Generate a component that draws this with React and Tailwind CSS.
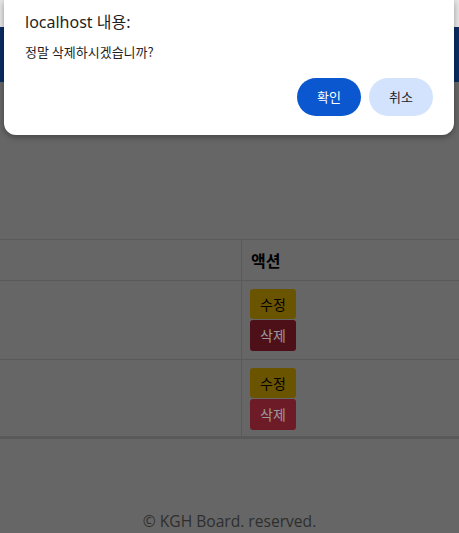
import React from "react";

const kr = { fontFamily: '"Noto Sans CJK KR", "Noto Sans", sans-serif' };

function Actions({ hover }) {
  return (
    <div className="flex flex-col items-start gap-px">
      <div className="w-[46px] h-[30px] rounded-[3px] bg-[#6b5400] text-black text-[14px] flex items-center justify-center">수정</div>
      <div className={"w-[46px] h-[31px] rounded-[3px] text-[#9a9a9a] text-[14px] flex items-center justify-center " + (hover ? "bg-[#6e1b28]" : "bg-[#4e1018]")}>삭제</div>
    </div>
  );
}

export default function App() {
  return (
    <div className="relative w-[459px] h-[533px] overflow-hidden bg-[#666666]" style={kr}>
      <div className="h-[27px] bg-[#e6e6e6]" />
      <div className="h-[55px] bg-[#0a2d63]" />
      <div className="h-[157px]" />
      <div className="border-t border-[#5a5a5a]">
        <div className="flex h-[41px] border-b border-[#595959]">
          <div className="w-[242px] border-r border-[#5a5a5a]" />
          <div className="flex-1 pl-[9px] flex items-center font-bold text-[16px] text-black">액션</div>
        </div>
        <div className="flex h-[79px] border-b border-[#595959]">
          <div className="w-[242px] border-r border-[#5a5a5a]" />
          <div className="flex-1 pl-[8px] pt-[8px]"><Actions /></div>
        </div>
        <div className="flex h-[79px] border-b-[3px] border-[#595959]">
          <div className="w-[242px] border-r border-[#5a5a5a]" />
          <div className="flex-1 pl-[8px] pt-[8px]"><Actions hover /></div>
        </div>
      </div>
      <div className="pt-[71px] text-center text-[15.6px] text-[#2e2e2e]" style={{ fontFamily: '"Open Sans", "Noto Sans CJK KR", sans-serif' }}>
        © KGH Board. reserved.
      </div>

      <div className="absolute left-[4px] top-0 w-[450px] h-[135px] bg-white rounded-b-[12px] shadow-[0_2px_6px_rgba(0,0,0,0.35)] px-[21px]">
        <div className="pt-[11px] text-[16px] text-[#1f1f1f] leading-[22px]" style={{ fontFamily: '"Noto Sans", "Noto Sans CJK KR", sans-serif' }}>localhost 내용:</div>
        <div className="mt-[10px] text-[13px] text-[#1f1f1f] leading-[18px]">정말 삭제하시겠습니까?</div>
        <div className="mt-[17px] flex justify-end gap-[8px]">
          <div className="w-[64px] h-[38px] rounded-full bg-[#0b57d0] text-white text-[13px] flex items-center justify-center">확인</div>
          <div className="w-[64px] h-[38px] rounded-full bg-[#d3e3fd] text-[#1f1f1f] text-[13px] flex items-center justify-center">취소</div>
        </div>
      </div>
    </div>
  );
}
